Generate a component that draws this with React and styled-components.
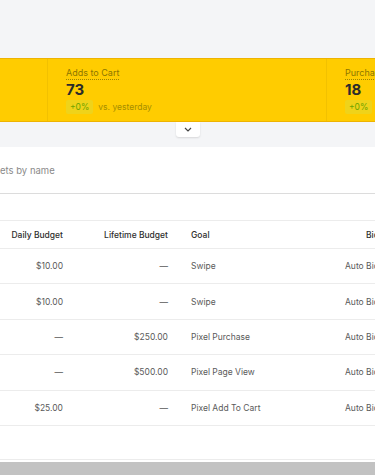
import React from "react";
import styled, { createGlobalStyle } from "styled-components";

const Global = createGlobalStyle`
  html, body { margin: 0; padding: 0; }
  body {
    width: 375px; height: 475px; overflow: hidden;
    background: #f4f5f7;
    font-family: Inter, "Noto Sans", Arial, sans-serif;
    -webkit-font-smoothing: antialiased;
  }
`;

const Page = styled.div`
  width: 375px; height: 475px; display: flex; flex-direction: column; overflow: hidden;
`;

const TopBar = styled.div`
  height: 58px; flex: none; background: #f4f5f7;
`;

const StatsBand = styled.div`
  height: 62px; flex: none; display: flex; overflow: hidden;
  background: #ffcc00;
  border-top: 1px solid #eeb300;
  border-bottom: 1px solid #eeb300;
`;

const StatCol = styled.div`
  flex: none; width: ${(p) => p.$w}px; box-sizing: border-box;
  padding: 8px 0 0 18px;
  border-right: ${(p) => (p.$divider ? "1px solid #f2c100" : "none")};
  white-space: nowrap; overflow: hidden;
  display: flex; flex-direction: column; align-items: flex-start;
`;

const StatLabel = styled.span`
  display: block; font-size: 9px; line-height: 11px; color: #8c7600;
  border-bottom: 1px dotted #9c8500; padding-bottom: 1px;
`;

const StatValue = styled.div`
  font-size: 15px; font-weight: 700; color: #2b2b2b; line-height: 17px; margin-top: 1px;
`;

const StatDelta = styled.div`
  display: flex; align-items: center; gap: 5px; margin-top: 2px;
`;

const Badge = styled.span`
  display: block; font-size: 8.5px; line-height: 14px; padding: 0 4px;
  background: #efd31a; color: #6ea300; border-radius: 2px;
`;

const DeltaText = styled.span`
  font-size: 8.5px; line-height: 14px; color: #a58c00;
`;

const Gutter = styled.div`
  height: 25px; flex: none; background: #f4f5f7; display: flex; justify-content: center;
`;

const ChevronTab = styled.div`
  width: 24px; height: 15px; background: #fff; border-radius: 0 0 3px 3px;
  box-shadow: 0 1px 2px rgba(0,0,0,0.12);
  display: flex; align-items: center; justify-content: center;
`;

const Panel = styled.div`
  background: #fff; flex: 1; display: flex; flex-direction: column;
`;

const SearchRow = styled.div`
  height: 47px; box-sizing: border-box; flex: none;
  border-bottom: 1px solid #dcdcdc;
  display: flex; align-items: center; padding-top: 1px;
  font-size: 9.5px; color: #8a8a8a;
`;

const Table = styled.div`
  margin-top: 26px; border-top: 1px solid #ececec;
  display: grid; grid-template-columns: 70px 105px 155px 1fr;
`;

const Cell = styled.div`
  height: ${(p) => (p.$head ? 27 : 34.4)}px;
  border-bottom: 1px solid #ececec;
  display: flex; align-items: center;
  justify-content: ${(p) => (p.$right ? "flex-end" : "flex-start")};
  padding: ${(p) => p.$pad || "0"};
  font-size: 8.5px;
  font-weight: ${(p) => (p.$head ? 500 : 400)};
  color: ${(p) => (p.$head ? "#2e2e2e" : "#5a5a5a")};
  white-space: nowrap; overflow: hidden;
`;

const EmptySpace = styled.div`
  flex: 1; border-bottom: 1px solid #ececec; margin-bottom: 2px;
`;

const Footer = styled.div`
  height: 13px; flex: none; background: #c2c2c2;
`;

const rows = [
  ["$10.00", "—", "Swipe", "Auto Bid"],
  ["$10.00", "—", "Swipe", "Auto Bid"],
  ["—", "$250.00", "Pixel Purchase", "Auto Bid"],
  ["—", "$500.00", "Pixel Page View", "Auto Bid"],
  ["$25.00", "—", "Pixel Add To Cart", "Auto Bid"],
];

function Stat({ w, divider, label, value }) {
  return (
    <StatCol $w={w} $divider={divider}>
      {label && (
        <>
          <StatLabel>{label}</StatLabel>
          <StatValue>{value}</StatValue>
          <StatDelta>
            <Badge>+0%</Badge>
            <DeltaText>vs. yesterday</DeltaText>
          </StatDelta>
        </>
      )}
    </StatCol>
  );
}

export default function App() {
  return (
    <Page>
      <Global />
      <TopBar />
      <StatsBand>
        <Stat w={48} divider />
        <Stat w={279} divider label="Adds to Cart" value="73" />
        <Stat w={100} label="Purchases" value="18" />
      </StatsBand>
      <Gutter>
        <ChevronTab>
          <svg width="8" height="5" viewBox="0 0 8 5">
            <path d="M1 1l3 3 3-3" fill="none" stroke="#444" strokeWidth="1.2" />
          </svg>
        </ChevronTab>
      </Gutter>
      <Panel>
        <SearchRow>ets by name</SearchRow>
        <Table>
          <Cell $head $right $pad="0 7px 0 0">Daily Budget</Cell>
          <Cell $head $right $pad="0 7px 0 0">Lifetime Budget</Cell>
          <Cell $head $pad="0 0 0 16px">Goal</Cell>
          <Cell $head $pad="0 0 0 36px">Bid Strategy</Cell>
          {rows.map((r, i) => (
            <React.Fragment key={i}>
              <Cell $right $pad="0 7px 0 0">{r[0]}</Cell>
              <Cell $right $pad="0 7px 0 0">{r[1]}</Cell>
              <Cell $pad="0 0 0 16px">{r[2]}</Cell>
              <Cell $pad="0 0 0 15px">{r[3]}</Cell>
            </React.Fragment>
          ))}
        </Table>
        <EmptySpace />
      </Panel>
      <Footer />
    </Page>
  );
}
